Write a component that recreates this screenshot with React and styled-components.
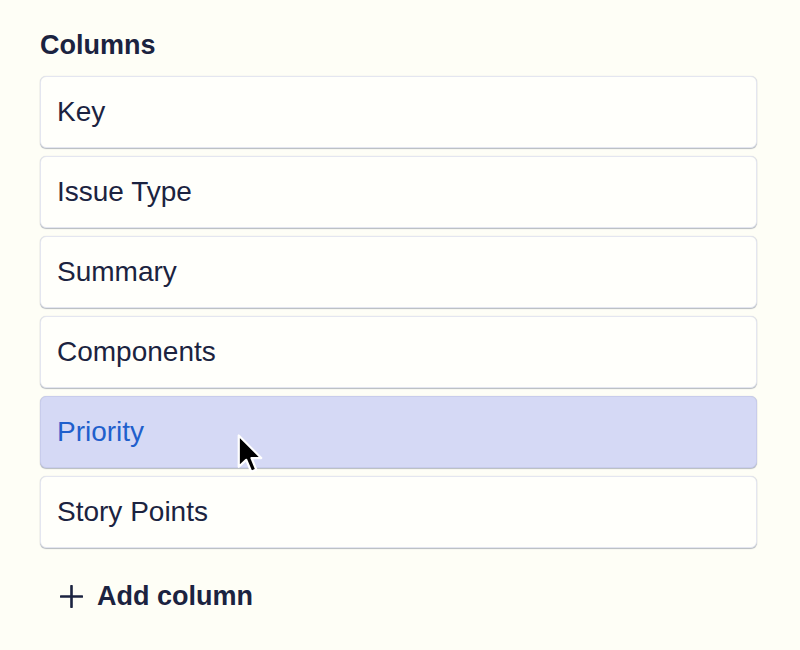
import React from "react";
import styled, { createGlobalStyle } from "styled-components";

const GlobalStyle = createGlobalStyle`
  body {
    margin: 0;
    background: #fefef6;
    font-family: "Liberation Sans", Arial, sans-serif;
    color: #1b2340;
  }
`;

const Panel = styled.div`
  padding: 29px 43px 0 40px;
  display: flex;
  flex-direction: column;
`;

const Heading = styled.h2`
  margin: 0 0 15px;
  font-size: 27px;
  line-height: 32px;
  font-weight: 700;
  color: #1b2340;
`;

const List = styled.div`
  display: flex;
  flex-direction: column;
  gap: 8px;
`;

const Card = styled.div`
  position: relative;
  height: 72px;
  box-sizing: border-box;
  display: flex;
  align-items: center;
  padding: 0 16px;
  border-radius: 6px;
  background: ${(p) => (p.active ? "#d5d9f5" : "#fffffb")};
  border: 1px solid ${(p) => (p.active ? "#c8ccec" : "#e4e6f0")};
  box-shadow: 0 1px 1px rgba(9, 30, 66, 0.28), 0 0 1px rgba(9, 30, 66, 0.2);
  font-size: 28px;
  line-height: 32px;
  color: ${(p) => (p.active ? "#1f5fcc" : "#1b2340")};
`;

const Cursor = styled.svg`
  position: absolute;
  left: 195px;
  top: 36px;
`;

const AddButton = styled.button`
  margin-top: 32px;
  align-self: flex-start;
  display: flex;
  align-items: center;
  gap: 14px;
  padding: 0 0 0 20px;
  border: none;
  background: none;
  font-family: inherit;
  font-size: 27px;
  line-height: 32px;
  font-weight: 700;
  color: #1b2340;
  cursor: pointer;
`;

const columns = ["Key", "Issue Type", "Summary", "Components", "Priority", "Story Points"];

function Pointer() {
  return (
    <Cursor width="28" height="45" viewBox="0 0 22 36">
      <path
        d="M2 2 L2 27 L8 21.5 L12 31 L16 29.3 L12.2 20 L20 20 Z"
        fill="#000"
        stroke="#fff"
        strokeWidth="1.8"
        strokeLinejoin="round"
      />
    </Cursor>
  );
}

export default function App() {
  return (
    <>
      <GlobalStyle />
      <Panel>
        <Heading>Columns</Heading>
        <List>
          {columns.map((c) => (
            <Card key={c} active={c === "Priority"}>
              {c}
              {c === "Priority" && <Pointer />}
            </Card>
          ))}
        </List>
        <AddButton>
          <svg width="23" height="23" viewBox="0 0 23 23">
            <path d="M11.5 1 V22 M1 11.5 H22" stroke="#1b2340" strokeWidth="2.6" strokeLinecap="round" />
          </svg>
          Add column
        </AddButton>
      </Panel>
    </>
  );
}
